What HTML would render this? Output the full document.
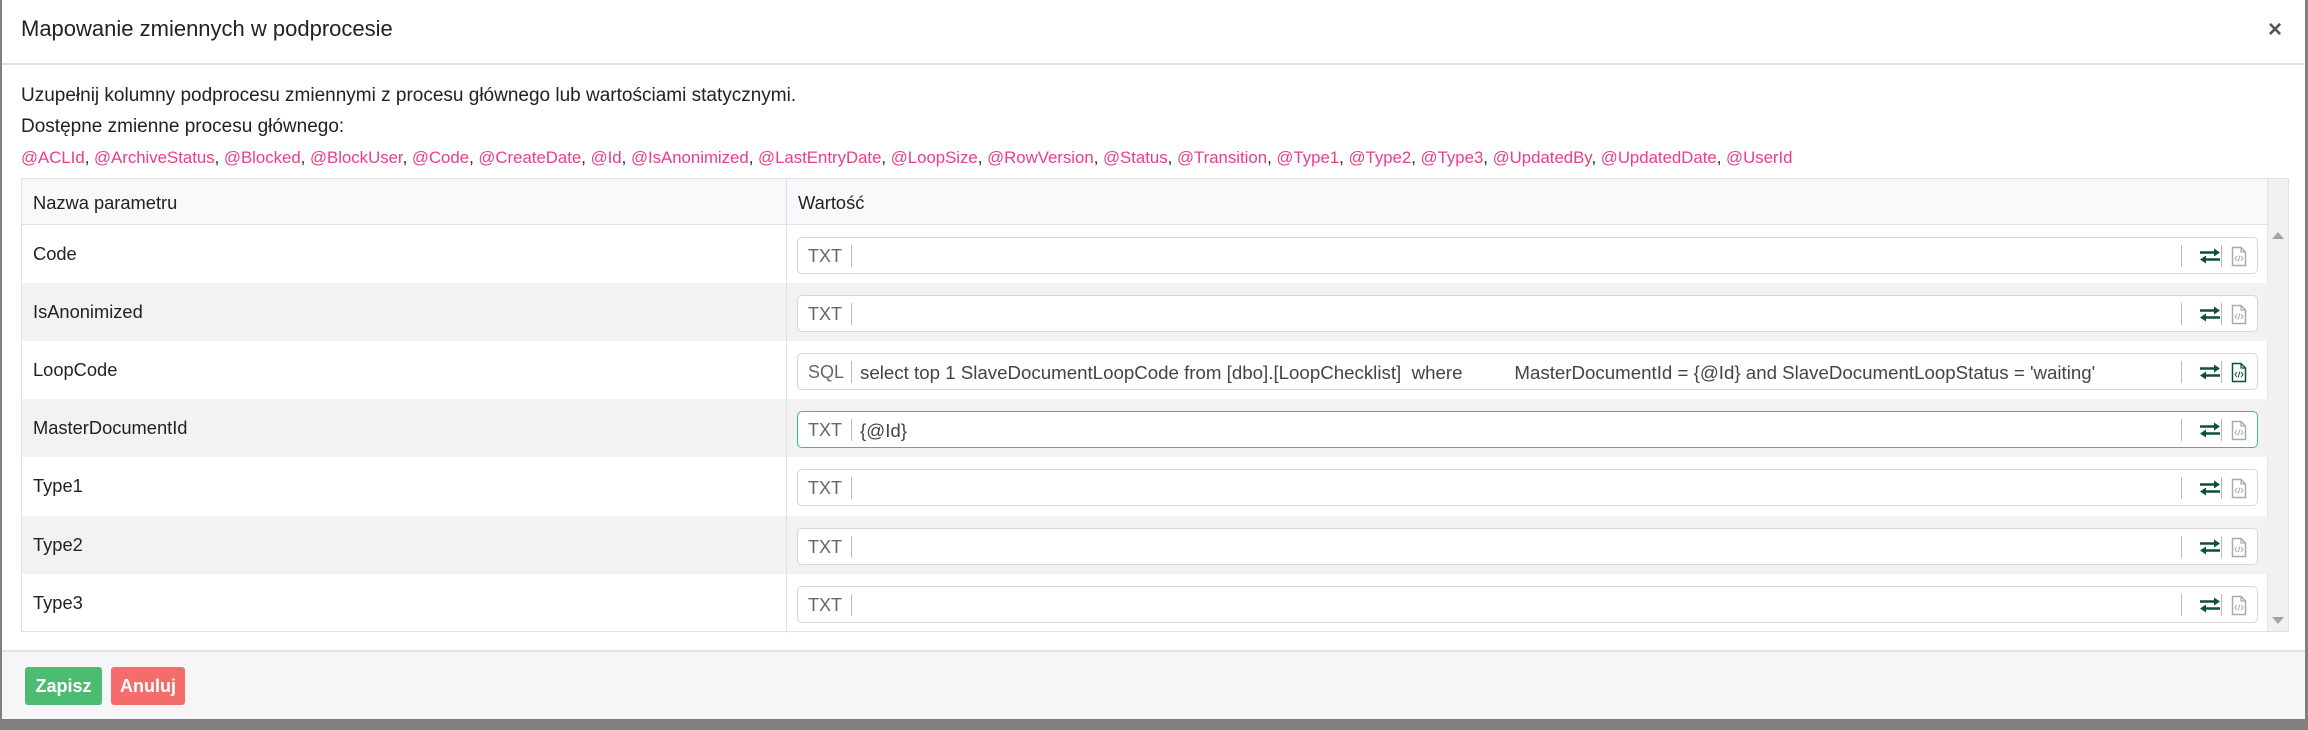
<!DOCTYPE html>
<html><head><meta charset="utf-8"><style>
*{box-sizing:border-box;margin:0;padding:0}
body{width:2308px;height:730px;background:#808080;font-family:"Liberation Sans",sans-serif;position:relative;overflow:hidden}
.modal{position:absolute;left:2px;top:0;width:2303px;height:719px;background:#fff}
.abs{position:absolute}
.title{left:19px;top:16px;font-size:22px;color:#222}
.hb{left:0;top:63px;width:2303px;height:2px;background:#dee2e6}
.t{font-size:19px;color:#222;left:19px}
.vars{left:19px;top:148px;font-size:16.8px;color:#e83e8c;white-space:nowrap}
.vars span{color:#222}
.table{left:19px;top:178px;width:2268px;height:454px;border:1.5px solid #dee2e6}
.hdr{left:0;top:0;width:2246px;height:46px;background:#f8f9fa;border-bottom:1.5px solid #dee2e6}
.row{left:0;width:2246px;height:58.2px}
.row.g{background:#f2f2f2}
.lbl{left:11px;font-size:18.3px;color:#222}
.inp{position:absolute;left:775px;top:12px;width:1461px;height:37px;border:1.5px solid #d6d6d6;border-radius:5px;background:#fff}
.inp.f{border-color:#33c08a}
.tp{position:absolute;left:10px;top:8px;font-size:18px;color:#666}
.sep{position:absolute;top:7px;width:1px;height:22px;background:#bbb}
.val{position:absolute;left:62px;top:8px;font-size:18.7px;color:#444;white-space:pre}
.vd{left:764px;top:0;width:1px;height:454px;background:#dee2e6}
.ic1{position:absolute;right:36px;top:10px}
.ic2{position:absolute;right:10px;top:8px}
.foot{left:0;top:650px;width:2303px;height:69px;background:#f6f6f8;border-top:2px solid #dee2e6}
.btn{position:absolute;top:15px;height:38px;color:#fff;font-size:18px;font-weight:bold;border-radius:3px;text-align:center;line-height:38px}
</style></head><body>
<div class="modal">
<div class="abs title">Mapowanie zmiennych w podprocesie</div>
<div class="abs" style="left:2266px;top:16px;font-size:24px;color:#555;font-weight:bold">×</div>
<div class="abs hb"></div>
<div class="abs t" style="top:85px">Uzupełnij kolumny podprocesu zmiennymi z procesu głównego lub wartościami statycznymi.</div>
<div class="abs t" style="top:116px">Dostępne zmienne procesu głównego:</div>
<div class="abs vars">@ACLId<span>, </span>@ArchiveStatus<span>, </span>@Blocked<span>, </span>@BlockUser<span>, </span>@Code<span>, </span>@CreateDate<span>, </span>@Id<span>, </span>@IsAnonimized<span>, </span>@LastEntryDate<span>, </span>@LoopSize<span>, </span>@RowVersion<span>, </span>@Status<span>, </span>@Transition<span>, </span>@Type1<span>, </span>@Type2<span>, </span>@Type3<span>, </span>@UpdatedBy<span>, </span>@UpdatedDate<span>, </span>@UserId</div>
<div class="abs table">
<div class="abs hdr"></div>
<div class="abs" style="left:2245px;top:0;width:21px;height:452px;background:#f1f1f1;border-left:1px solid #e3e3e3"></div>
<div class="abs" style="left:2250px;top:53px;width:0;height:0;border-left:6px solid transparent;border-right:6px solid transparent;border-bottom:7px solid #a3a3a3"></div>
<div class="abs" style="left:2250px;top:438px;width:0;height:0;border-left:6px solid transparent;border-right:6px solid transparent;border-top:7px solid #a3a3a3"></div>
<div class="abs lbl" style="top:13px">Nazwa parametru</div>
<div class="abs lbl" style="left:776px;top:13px">Wartość</div>
<div id="rows"></div>
<div class="abs vd"></div>
</div>
<div class="abs foot">
<div class="btn" style="left:23px;width:77px;background:#4cbc72">Zapisz</div>
<div class="btn" style="left:109px;width:74px;background:#f56c6c">Anuluj</div>
</div>
</div>
<script>
var R=[["Code","TXT",""],["IsAnonimized","TXT",""],["LoopCode","SQL","select top 1 SlaveDocumentLoopCode from [dbo].[LoopChecklist]  where          MasterDocumentId = {@Id} and SlaveDocumentLoopStatus = 'waiting'"],["MasterDocumentId","TXT","{@Id}"],["Type1","TXT",""],["Type2","TXT",""],["Type3","TXT",""]];
var h="";
R.forEach(function(r,i){
var top=46+i*58.1;var act=i==2;var fc=act?"#0f5132":"#aaa";
h+='<div class="abs row'+(i%2?' g':'')+'" style="top:'+top+'px"><div class="abs lbl" style="top:18px">'+r[0]+'</div>'+
'<div class="inp'+(i==3?' f':'')+'"><div class="tp">'+r[1]+'</div><div class="sep" style="left:53px"></div><div class="val">'+r[2]+'</div>'+
'<div class="sep" style="right:75px"></div><div class="sep" style="right:35px"></div>'+
'<svg class="ic1" width="22" height="16" viewBox="0 0 22 16"><path d="M1 4.5H17" stroke="#0f5132" stroke-width="2.5"/><path d="M15 0.5L21 4.5L15 8.5Z" fill="#0f5132"/><path d="M5 11.5H21" stroke="#0f5132" stroke-width="2.5"/><path d="M7 7.5L1 11.5L7 15.5Z" fill="#0f5132"/></svg>'+
'<svg class="ic2" width="16" height="21" viewBox="0 0 16 21"><path d="M1.5 1.5H10L14.5 6V19.5H1.5Z" fill="none" stroke="'+fc+'" stroke-width="1.5"/><path d="M10 1.5V6H14.5" fill="none" stroke="'+fc+'" stroke-width="1.2"/><path d="M6 10L4 12.5L6 15M10 10L12 12.5L10 15M8.8 9.5L7.2 15.5" fill="none" stroke="'+fc+'" stroke-width="1"/></svg>'+
'</div></div>';});
document.getElementById("rows").outerHTML=h;
</script>
</body></html>
